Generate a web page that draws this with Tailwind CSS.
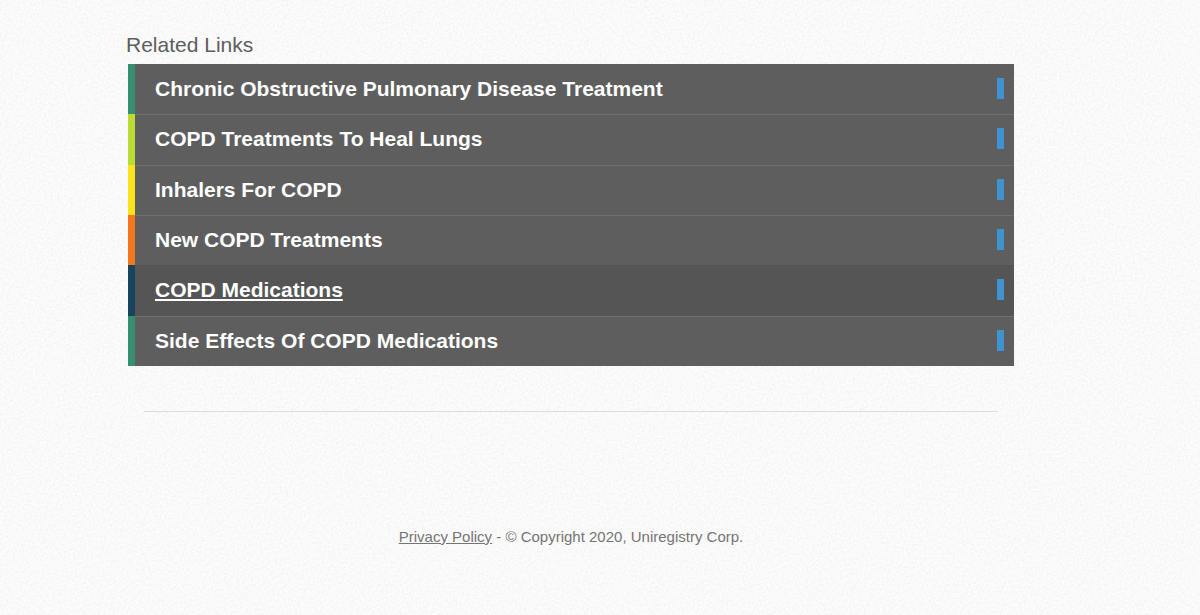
<!DOCTYPE html>
<html lang="en">
  <head>
    <meta charset="utf-8">
    <meta name="viewport" content="width=device-width, initial-scale=1">
    <title>Related Links</title>
    <script src="https://cdn.jsdelivr.net/npm/@tailwindcss/browser@4"></script>
  </head>

  <body class="relative min-h-screen bg-[#fcfcfc] font-['Liberation_Sans',Arial,sans-serif]">
    <!-- paper texture -->
    <svg class="absolute inset-0 -z-10 size-full" aria-hidden="true">
      <filter id="grain">
        <feTurbulence type="fractalNoise" baseFrequency="0.45" numOctaves="2" />
        <feColorMatrix values="0 0 0 0 0  0 0 0 0 0  0 0 0 0 0  0.08 0 0 0 -0.03" />
      </filter>
      <rect width="100%" height="100%" filter="url(#grain)" />
    </svg>

    <main class="ml-32 mr-[186px] pt-[31px]">
      <h1 class="-ml-0.5 pb-[5px] text-[21px] leading-7 text-[#5e5e5e]">Related Links</h1>
      <ul class="grid min-h-[302px] auto-rows-fr text-[21px] font-bold text-white">
        <li class="flex border-l-7 border-[#368f6f] bg-[#5e5e5e]">
          <a href="#" class="flex flex-1 items-center justify-between pb-px pl-5 pr-2.5 hover:underline">Chronic Obstructive Pulmonary Disease Treatment<span class="h-[21px] w-[7px] bg-[#3d94d1]"></span></a>
        </li>
        <li class="flex border-l-7 border-[#bddb35] bg-[#5e5e5e]">
          <a href="#" class="flex flex-1 items-center justify-between border-t border-[#6e6e6e] pb-0.5 pl-5 pr-2.5 hover:underline">COPD Treatments To Heal Lungs<span class="h-[21px] w-[7px] bg-[#3d94d1]"></span></a>
        </li>
        <li class="flex border-l-7 border-[#fae31c] bg-[#5e5e5e]">
          <a href="#" class="flex flex-1 items-center justify-between border-t border-[#6e6e6e] pb-0.5 pl-5 pr-2.5 hover:underline">Inhalers For COPD<span class="h-[21px] w-[7px] bg-[#3d94d1]"></span></a>
        </li>
        <li class="flex border-l-7 border-[#f4771e] bg-[#5e5e5e]">
          <a href="#" class="flex flex-1 items-center justify-between border-t border-[#6e6e6e] pb-0.5 pl-5 pr-2.5 hover:underline">New COPD Treatments<span class="h-[21px] w-[7px] bg-[#3d94d1]"></span></a>
        </li>
        <li class="flex border-l-7 border-[#17435c] bg-[#555555]">
          <a href="#" class="flex flex-1 items-center justify-between pb-px pl-5 pr-2.5 underline decoration-2 underline-offset-2">COPD Medications<span class="h-[21px] w-[7px] bg-[#3d94d1]"></span></a>
        </li>
        <li class="flex border-l-7 border-[#368f6f] bg-[#5e5e5e]">
          <a href="#" class="flex flex-1 items-center justify-between border-t border-[#6e6e6e] pb-0.5 pl-5 pr-2.5 hover:underline">Side Effects Of COPD Medications<span class="h-[21px] w-[7px] bg-[#3d94d1]"></span></a>
        </li>
      </ul>
      <hr class="mx-4 mt-[45px] border-[#dddddd]">
    </main>

    <footer class="ml-32 mr-[186px] pt-[113px] pb-16 text-center text-[15px] leading-6 text-[#757575]">
      <a href="#" class="underline">Privacy Policy</a> - © Copyright 2020, Uniregistry Corp.
    </footer>
  </body>
</html>
